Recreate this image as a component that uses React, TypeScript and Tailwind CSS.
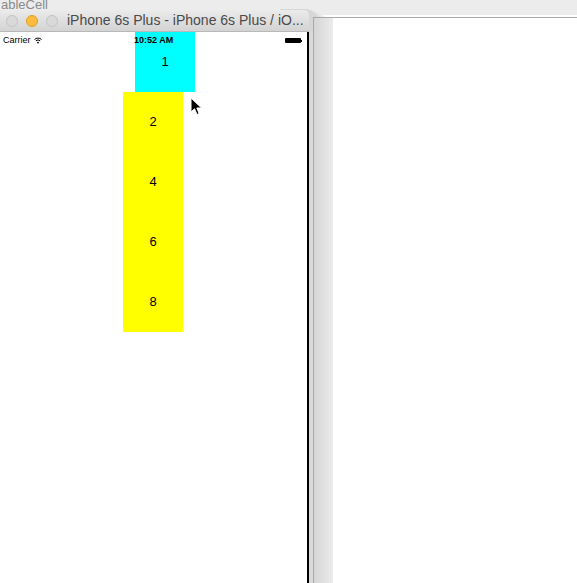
import React from "react";

const cells = ["2", "4", "6", "8"];

function TrafficLight({ color }: { color: "gray" | "orange" }) {
  return color === "orange" ? (
    <div className="h-[12px] w-[12px] rounded-full border border-[#dfa023] bg-[#fdbc40]" />
  ) : (
    <div className="h-[12px] w-[12px] rounded-full border border-[#c4c4c4] bg-[#d9d9d9]" />
  );
}

function Cursor() {
  return (
    <svg width="14" height="20" viewBox="0 0 14 20" className="absolute left-[190px] top-[65px]">
      <path
        d="M1 1 L1 15 L4.5 11.8 L7 17.5 L9.2 16.5 L6.8 11 L11.5 11 Z"
        fill="#000"
        stroke="#fff"
        strokeWidth="1"
        strokeLinejoin="round"
      />
    </svg>
  );
}

function StatusBar() {
  return (
    <div className="absolute inset-x-0 top-0 flex h-[17px] items-center justify-between px-[3px] text-[9px] text-black">
      <div className="flex items-center gap-[3px]">
        <span>Carrier</span>
        <svg width="8" height="7" viewBox="0 0 8 7">
          <path d="M0.5 2.5 A5 5 0 0 1 7.5 2.5" fill="none" stroke="#000" strokeWidth="1" />
          <path d="M1.8 3.9 A3.2 3.2 0 0 1 6.2 3.9" fill="none" stroke="#000" strokeWidth="1" />
          <circle cx="4" cy="5.6" r="0.9" fill="#000" />
        </svg>
      </div>
      <span className="absolute left-[134px] font-bold">10:52 AM</span>
      <div className="mr-[2px] flex items-center">
        <div className="h-[5px] w-[16px] rounded-[1px] bg-black" />
        <div className="h-[2px] w-[1px] bg-black" />
      </div>
    </div>
  );
}

function SimulatorScreen() {
  return (
    <div className="relative flex-1 border-r-2 border-black bg-white">
      <div className="flex flex-col">
        <div className="ml-[135px] flex h-[60px] w-[60px] items-center justify-center bg-[#00ffff] text-[13px]">
          1
        </div>
        <div className="ml-[123px] flex w-[60px] flex-col bg-[#ffff00]">
          {cells.map((c) => (
            <div key={c} className="flex h-[60px] items-center justify-center text-[13px]">
              {c}
            </div>
          ))}
        </div>
      </div>
      <StatusBar />
      <Cursor />
    </div>
  );
}

export default function App() {
  return (
    <div
      className="relative h-[583px] w-[577px] overflow-hidden bg-white"
      style={{ fontFamily: '"Liberation Sans", Arial, sans-serif' }}
    >
      {/* xcode background */}
      <div className="h-[17px] bg-[#ececec]">
        <div className="-mt-[2px] pl-[1px] text-[13px] leading-[13px] text-[#8a8a8a]">ableCell</div>
      </div>

      {/* simulator window shadow */}
      <div className="absolute left-[280px] top-[9px] bottom-0 w-[52px] rounded-tr-[26px] bg-[#ebebeb]">
        <div className="h-full w-[46px] rounded-tr-[22px] bg-[#e0e0e0]">
          <div className="h-full w-[40px] rounded-tr-[16px] bg-[#d6d6d6]" />
        </div>
      </div>

      {/* editor border */}
      <div className="absolute left-[313px] top-[17px] bottom-0 right-0 border-l border-t border-[#a9a9a9] bg-white">
        <div className="h-full w-[19px] bg-gradient-to-r from-[#d6d6d6] via-[#e0e0e0] to-[#ececec]" />
      </div>

      {/* simulator window */}
      <div className="absolute left-0 top-[10px] bottom-0 flex w-[313px] flex-col">
        <div className="flex">
          <div className="flex w-[309px] flex-col">
            <div className="flex h-[22px] items-center rounded-tr-[5px] border-b border-[#b8b8b8] bg-gradient-to-b from-[#ebebeb] to-[#d3d3d3]">
              <div className="ml-[6px] flex gap-[8px]">
                <TrafficLight color="gray" />
                <TrafficLight color="orange" />
                <TrafficLight color="gray" />
              </div>
              <span className="ml-[9px] text-[14px] text-[#4a4a4a]">iPhone 6s Plus - iPhone 6s Plus / iO...</span>
            </div>
          </div>
        </div>
        <div className="flex flex-1">
          <div className="flex w-[309px]">
            <SimulatorScreen />
          </div>
          <div className="w-[4px] bg-[#dadada]" />
        </div>
      </div>
    </div>
  );
}
